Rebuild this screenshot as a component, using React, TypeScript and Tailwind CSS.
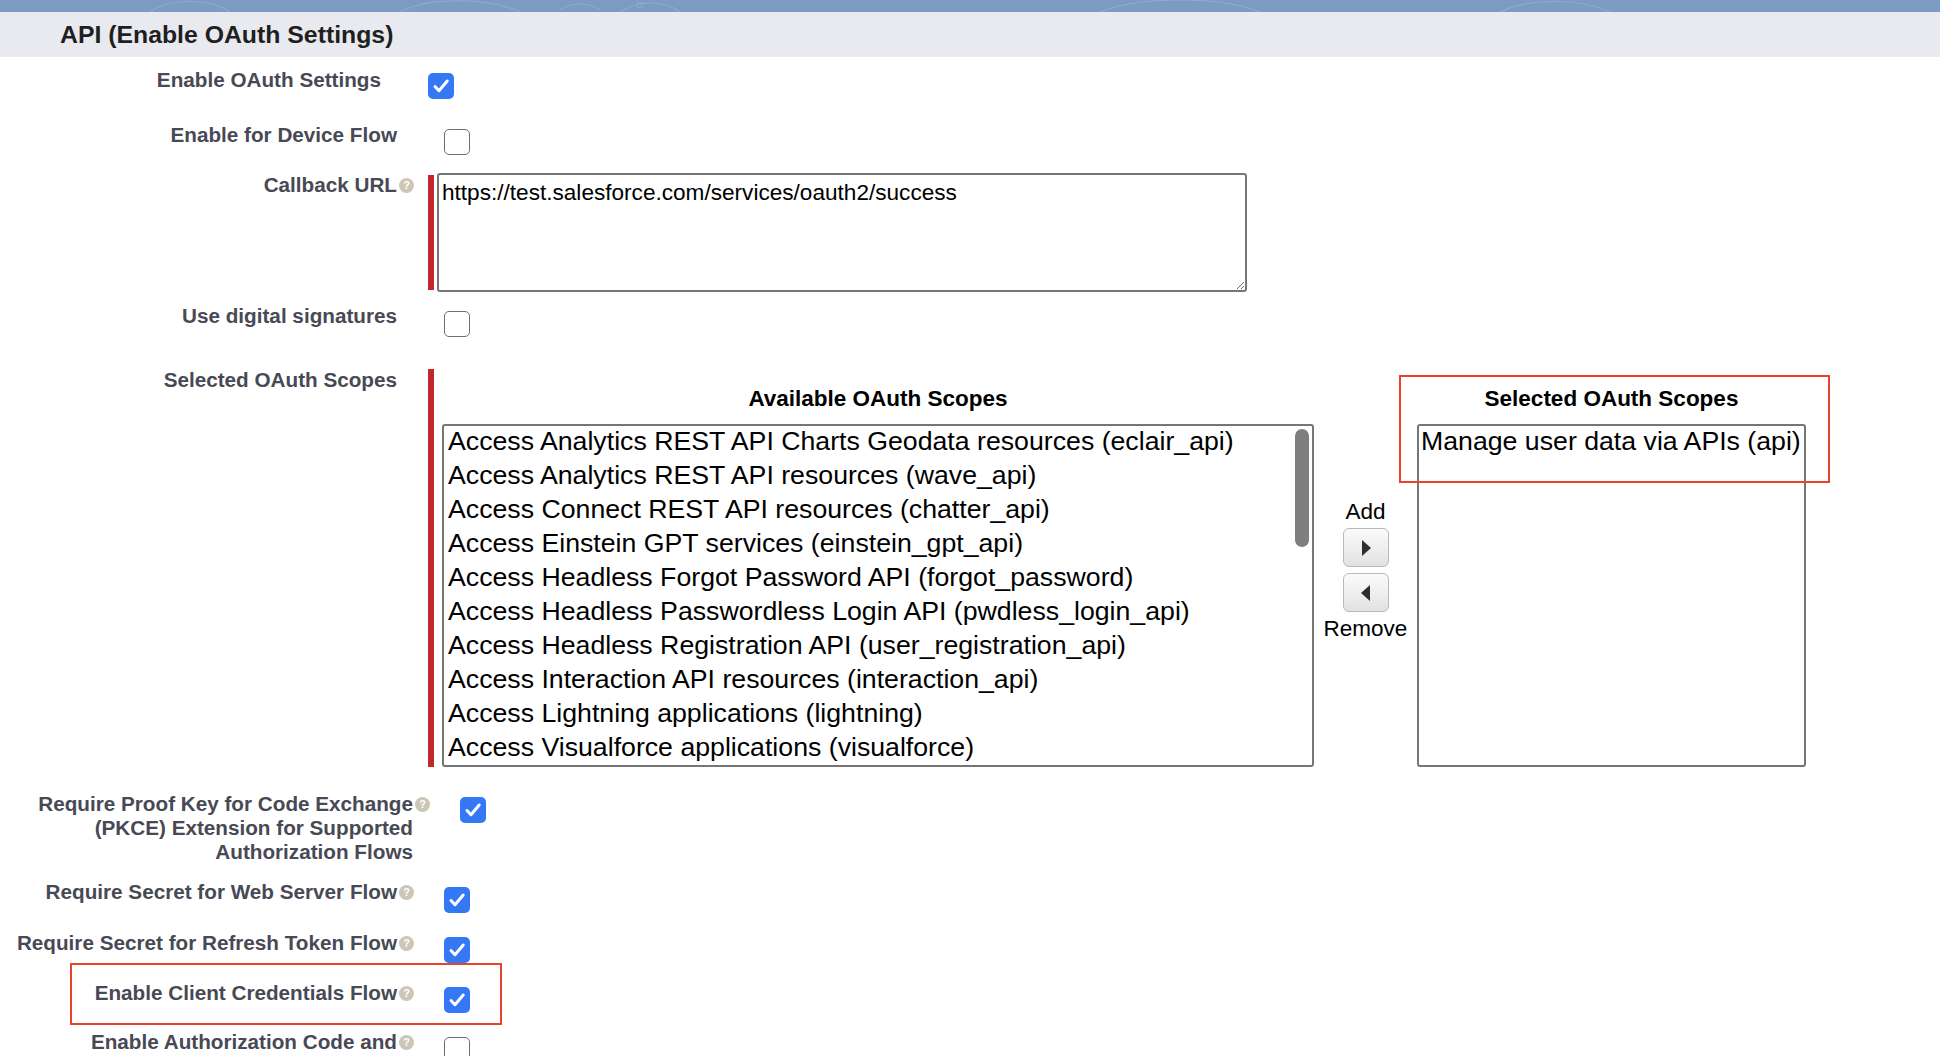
import React from 'react'

/**
 * API (Enable OAuth Settings) section of a connected-app edit page
 */

const availableScopes = [
  'Access Analytics REST API Charts Geodata resources (eclair_api)',
  'Access Analytics REST API resources (wave_api)',
  'Access Connect REST API resources (chatter_api)',
  'Access Einstein GPT services (einstein_gpt_api)',
  'Access Headless Forgot Password API (forgot_password)',
  'Access Headless Passwordless Login API (pwdless_login_api)',
  'Access Headless Registration API (user_registration_api)',
  'Access Interaction API resources (interaction_api)',
  'Access Lightning applications (lightning)',
  'Access Visualforce applications (visualforce)',
]

function HelpIcon() {
  return (
    <span className="ml-[2px] mt-[5px] flex h-[15px] w-[15px] shrink-0 items-center justify-center rounded-full bg-[#cdc6b6] text-[11px] font-bold leading-none text-white">
      ?
    </span>
  )
}

function Checkbox({ checked, className = '' }: { checked?: boolean; className?: string }) {
  if (checked) {
    return (
      <div className={`flex h-[26px] w-[26px] items-center justify-center rounded-[5px] bg-[#3478f6] ${className}`}>
        <svg width="20" height="20" viewBox="0 0 20 20" fill="none">
          <path d="M4 10.5l4 4.2L16.2 5" stroke="white" strokeWidth="3" strokeLinecap="round" strokeLinejoin="round" />
        </svg>
      </div>
    )
  }
  return <div className={`h-[26px] w-[26px] rounded-[5px] border-[1.5px] border-[#6f6f6f] bg-white ${className}`} />
}

interface RowProps {
  labelClass: string
  heightClass: string
  label: React.ReactNode
  help?: boolean
  fieldClass?: string
  children: React.ReactNode
}

function Row({ labelClass, heightClass, label, help, fieldClass = 'pl-[30px]', children }: RowProps) {
  return (
    <div className={`relative flex items-start ${heightClass}`}>
      <div className={`flex shrink-0 justify-end ${labelClass}`}>
        <div className="whitespace-nowrap text-right text-[20.7px] font-bold leading-[24px] text-[#484955]">{label}</div>
        {help ? <HelpIcon /> : <span className="w-[17px] shrink-0" />}
      </div>
      <div className={fieldClass}>{children}</div>
    </div>
  )
}

function ArrowButton({ dir }: { dir: 'right' | 'left' }) {
  return (
    <div className="flex h-[39px] w-[46px] items-center justify-center rounded-[6px] border border-[#b9b9b9] bg-gradient-to-b from-[#fbfbfb] to-[#e2e2e2]">
      <svg width="12" height="18" viewBox="0 0 12 18">
        {dir === 'right' ? <path d="M2 1l9 8-9 8z" fill="#2e2e2e" /> : <path d="M10 1L1 9l9 8z" fill="#2e2e2e" />}
      </svg>
    </div>
  )
}

export default function App() {
  return (
    <div className="h-screen overflow-hidden bg-white font-['Liberation_Sans',Arial,sans-serif]">
      {/* 顶部装饰条 */}
      <div className="h-[12px] bg-[#7b9bc3]">
        <svg width="100%" height="12" viewBox="0 0 1940 12" preserveAspectRatio="none" fill="none">
          <path d="M150 12c20-14 60-14 80 0M400 12c30-16 90-14 120 0M560 10c10-8 30-8 40 0M620 12c18-12 44-12 60 0M1100 12c40-16 120-16 160 0M1500 12c30-14 80-14 110 0" stroke="#8eaad0" strokeWidth="1.2" />
          <circle cx="640" cy="5" r="3" stroke="#8eaad0" strokeWidth="1" />
        </svg>
      </div>

      {/* 标题栏 */}
      <div className="flex h-[45px] items-center bg-[#e9eaef] pl-[60px]">
        <h2 className="text-[24.8px] font-bold leading-[29px] text-[#1f1f1f]">API (Enable OAuth Settings)</h2>
      </div>

      <div className="pt-[11px]">
        <Row labelClass="w-[398px]" heightClass="h-[55px]" label="Enable OAuth Settings">
          <Checkbox checked className="mt-[5px]" />
        </Row>

        <Row labelClass="w-[414px]" heightClass="h-[50px]" label="Enable for Device Flow">
          <Checkbox className="mt-[6px]" />
        </Row>

        <Row labelClass="w-[414px]" heightClass="h-[131px]" label="Callback URL" help fieldClass="pl-[14px]">
          <div className="flex">
            <div className="my-[2px] w-[6px] bg-[#c1272d]" />
            <textarea
              readOnly
              defaultValue="https://test.salesforce.com/services/oauth2/success"
              className="ml-[3px] h-[119px] w-[810px] rounded-[3px] border-2 border-[#767676] px-[3px] pt-[4px] text-[22.6px] leading-[27px] text-black outline-none"
            />
          </div>
        </Row>

        <Row labelClass="w-[414px]" heightClass="h-[64px]" label="Use digital signatures">
          <Checkbox className="mt-[7px]" />
        </Row>

        <Row labelClass="w-[414px]" heightClass="h-[424px]" label="Selected OAuth Scopes" fieldClass="pl-[14px] pt-[1px]">
          <div className="flex pb-[3px]">
            <div className="w-[6px] bg-[#c1272d]" />
            <div className="ml-[8px] flex pt-[16px]">
              {/* 可选范围 */}
              <div className="w-[872px]">
                <div className="text-center text-[22.5px] font-bold leading-[27px] text-black">Available OAuth Scopes</div>
                <div className="relative mt-[12px] h-[343px] overflow-hidden rounded-[3px] border-2 border-[#767676] pl-[4px]">
                  <div className="-mt-[2px]">
                    {availableScopes.map((s) => (
                      <div key={s} className="whitespace-nowrap text-[26.7px] leading-[34px] text-black">
                        {s}
                      </div>
                    ))}
                  </div>
                  <div className="absolute right-[3px] top-[3px] h-[118px] w-[14px] rounded-full bg-[#7f7f7f]" />
                </div>
              </div>

              {/* 添加 / 移除 */}
              <div className="flex w-[103px] flex-col items-center pt-[113px] text-[22.5px] leading-[27px] text-black">
                <span>Add</span>
                <div className="mt-[3px]">
                  <ArrowButton dir="right" />
                </div>
                <div className="mt-[6px]">
                  <ArrowButton dir="left" />
                </div>
                <span className="mt-[3px]">Remove</span>
              </div>

              {/* 已选范围 */}
              <div className="relative w-[389px]">
                <div className="text-center text-[22.5px] font-bold leading-[27px] text-black">Selected OAuth Scopes</div>
                <div className="mt-[12px] h-[343px] rounded-[3px] border-2 border-[#767676] pl-[2px]">
                  <div className="-mt-[2px] whitespace-nowrap text-[26.7px] leading-[34px] text-black">Manage user data via APIs (api)</div>
                </div>
                <div className="absolute left-[-18px] top-[-10px] h-[108px] w-[431px] border-2 border-[#e8432d]" />
              </div>
            </div>
          </div>
        </Row>

        <Row
          labelClass="w-[430px]"
          heightClass="h-[88px]"
          help
          label={
            <>
              Require Proof Key for Code Exchange
              <br />
              (PKCE) Extension for Supported
              <br />
              Authorization Flows
            </>
          }
        >
          <Checkbox checked className="mt-[5px]" />
        </Row>

        <Row labelClass="w-[414px]" heightClass="h-[51px]" label="Require Secret for Web Server Flow" help>
          <Checkbox checked className="mt-[7px]" />
        </Row>

        <Row labelClass="w-[414px]" heightClass="h-[50px]" label="Require Secret for Refresh Token Flow" help>
          <Checkbox checked className="mt-[6px]" />
        </Row>

        <Row labelClass="w-[414px]" heightClass="h-[49px]" label="Enable Client Credentials Flow" help>
          <Checkbox checked className="mt-[6px]" />
          <div className="absolute left-[70px] top-[-18px] h-[62px] w-[432px] border-2 border-[#e8432d]" />
        </Row>

        <Row labelClass="w-[414px]" heightClass="h-[50px]" label="Enable Authorization Code and" help>
          <Checkbox className="mt-[7px]" />
        </Row>
      </div>
    </div>
  )
}
